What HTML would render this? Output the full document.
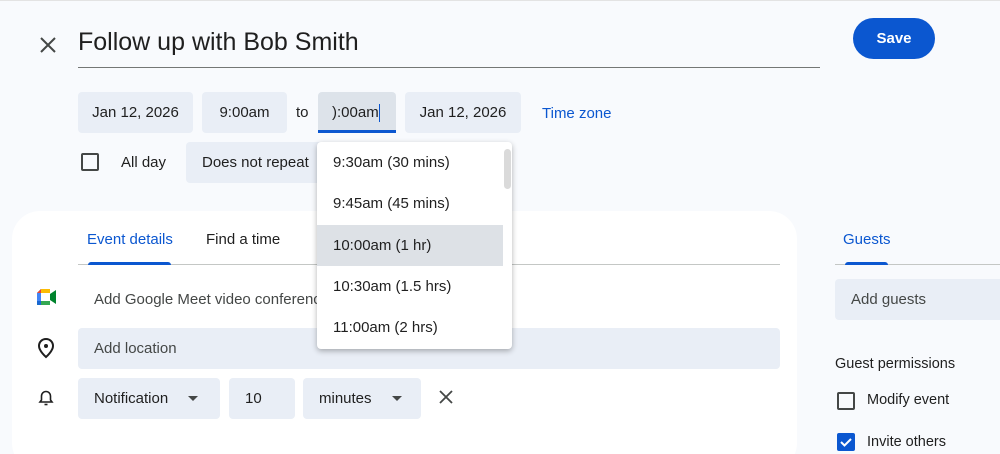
<!DOCTYPE html>
<html style="overflow:hidden;width:1000px;height:454px"><head><style>
*{box-sizing:border-box;margin:0;padding:0}
body{width:1000px;height:454px;overflow:hidden;background:#f8fafd;font-family:"Liberation Sans",sans-serif;color:#1f1f1f;position:relative;border-top:1px solid #e3e3e3}
.a{position:absolute}
.chip{position:absolute;background:#e9eef6;border-radius:4px;font-size:15px;display:flex;align-items:center;justify-content:center;color:#1f1f1f}
.t{position:absolute;font-size:15px;white-space:nowrap}
.cb{position:absolute;width:18px;height:18px;border:2px solid #444746;border-radius:2px}
.item{position:absolute;left:0;width:186px;height:41px;padding-left:16px;display:flex;align-items:center;font-size:15px}
</style></head><body>
<svg class="a" style="left:38px;top:34px" width="20" height="20" viewBox="0 0 20 20"><path d="M3 3L17 17M17 3L3 17" stroke="#444746" stroke-width="2"/></svg>
<div class="t" style="left:78px;top:27px;font-size:25px">Follow up with Bob Smith</div>
<div class="a" style="left:78px;top:66px;width:742px;height:1px;background:#747775"></div>
<div class="a" style="left:853px;top:17px;width:82px;height:41px;border-radius:21px;background:#0b57d0;color:#fff;font-size:15px;font-weight:bold;display:flex;align-items:center;justify-content:center">Save</div>

<div class="chip" style="left:78px;top:91px;width:115px;height:41px">Jan 12, 2026</div>
<div class="chip" style="left:202px;top:91px;width:85px;height:41px">9:00am</div>
<div class="t" style="left:296px;top:103px">to</div>
<div class="chip" style="left:318px;top:91px;width:78px;height:41px;background:#dde3ea;border-radius:4px 4px 0 0;justify-content:flex-start;padding-left:14px">):00am<span style="display:inline-block;width:1px;height:18px;background:#0b57d0"></span></div>
<div class="a" style="left:318px;top:129px;width:78px;height:3px;background:#0b57d0"></div>
<div class="chip" style="left:405px;top:91px;width:116px;height:41px">Jan 12, 2026</div>
<div class="t" style="left:542px;top:104px;color:#0b57d0">Time zone</div>

<div class="cb" style="left:81px;top:152px"></div>
<div class="t" style="left:121px;top:153px">All day</div>
<div class="chip" style="left:186px;top:141px;width:140px;height:41px;justify-content:flex-start;padding-left:16px">Does not repeat</div>

<div class="a" style="left:12px;top:210px;width:785px;height:260px;background:#fff;border-radius:28px"></div>
<div class="t" style="left:87px;top:230px;color:#0b57d0">Event details</div>
<div class="t" style="left:206px;top:230px">Find a time</div>
<div class="a" style="left:78px;top:263px;width:702px;height:1px;background:#c4c7c5"></div>
<div class="a" style="left:88px;top:261px;width:83px;height:3px;background:#0b57d0;border-radius:3px 3px 0 0"></div>
<svg class="a" style="left:37px;top:288px" width="20" height="16" viewBox="0 0 20 16"><path d="M0 4L4 0H13V16H0Z" fill="#34a853"/><path d="M0 4L4 0V4Z" fill="#ea4335"/><path d="M4 0H13V5H4Z" fill="#fbbc04"/><path d="M0 4H4V12H0Z" fill="#4285f4"/><path d="M0 12H4V16H1Q0 16 0 15Z" fill="#1967d2"/><path d="M13 5L19 1V15L13 11Z" fill="#00832d"/><rect x="4" y="4" width="9" height="8" fill="#fff"/></svg>
<div class="t" style="left:94px;top:290px;color:#444746">Add Google Meet video conferenc</div>
<svg class="a" style="left:37px;top:336px" width="18" height="22" viewBox="0 0 18 22"><path d="M9 2C5 2 2 5 2 9C2 14 9 20 9 20C9 20 16 14 16 9C16 5 13 2 9 2Z" fill="none" stroke="#1f1f1f" stroke-width="2"/><circle cx="9" cy="9" r="2" fill="#1f1f1f"/></svg>
<div class="chip" style="left:78px;top:327px;width:702px;height:41px;justify-content:flex-start;padding-left:16px;color:#444746">Add location</div>
<svg class="a" style="left:38px;top:388px" width="16" height="18" viewBox="0 0 16 18"><path d="M2 13H14L12.5 11V7A4.5 4.5 0 0 0 3.5 7V11Z" fill="none" stroke="#1f1f1f" stroke-width="1.6"/><path d="M6.5 15.5H9.5" stroke="#1f1f1f" stroke-width="1.6"/></svg>
<div class="chip" style="left:78px;top:377px;width:142px;height:41px;justify-content:flex-start;padding-left:16px">Notification<svg style="margin-left:20px" width="10" height="5"><path d="M0 0H10L5 5Z" fill="#444746"/></svg></div>
<div class="chip" style="left:229px;top:377px;width:66px;height:41px;justify-content:flex-start;padding-left:16px">10</div>
<div class="chip" style="left:303px;top:377px;width:118px;height:41px;justify-content:flex-start;padding-left:16px">minutes<svg style="margin-left:20px" width="10" height="5"><path d="M0 0H10L5 5Z" fill="#444746"/></svg></div>
<svg class="a" style="left:439px;top:389px" width="14" height="14" viewBox="0 0 14 14"><path d="M1 1L13 13M13 1L1 13" stroke="#444746" stroke-width="1.8"/></svg>

<div class="t" style="left:843px;top:230px;color:#0b57d0">Guests</div>
<div class="a" style="left:835px;top:263px;width:165px;height:1px;background:#c4c7c5"></div>
<div class="a" style="left:845px;top:261px;width:43px;height:3px;background:#0b57d0;border-radius:3px 3px 0 0"></div>
<div class="chip" style="left:835px;top:278px;width:170px;height:41px;justify-content:flex-start;padding-left:16px;color:#444746">Add guests</div>
<div class="t" style="left:835px;top:355px;font-size:14.5px">Guest permissions</div>
<div class="cb" style="left:837px;top:391px"></div>
<div class="t" style="left:867px;top:391px;font-size:14.5px">Modify event</div>
<div class="a" style="left:837px;top:432px;width:18px;height:18px;background:#0b57d0;border-radius:2px"><svg width="18" height="18"><path d="M4 9L7.5 12.5L14 6" stroke="#fff" stroke-width="2" fill="none"/></svg></div>
<div class="t" style="left:867px;top:433px;font-size:14.5px">Invite others</div>

<div class="a" style="left:317px;top:141px;width:195px;height:207px;background:#fff;border-radius:4px;box-shadow:0 2px 6px rgba(0,0,0,.3);overflow:hidden">
<div class="item" style="top:0">9:30am (30 mins)</div>
<div class="item" style="top:41px">9:45am (45 mins)</div>
<div class="item" style="top:83px;background:#dde1e6">10:00am (1 hr)</div>
<div class="item" style="top:124px">10:30am (1.5 hrs)</div>
<div class="item" style="top:165px">11:00am (2 hrs)</div>
<div class="a" style="left:187px;top:7px;width:7px;height:40px;background:#dadada;border-radius:4px"></div>
</div>
</body></html>
